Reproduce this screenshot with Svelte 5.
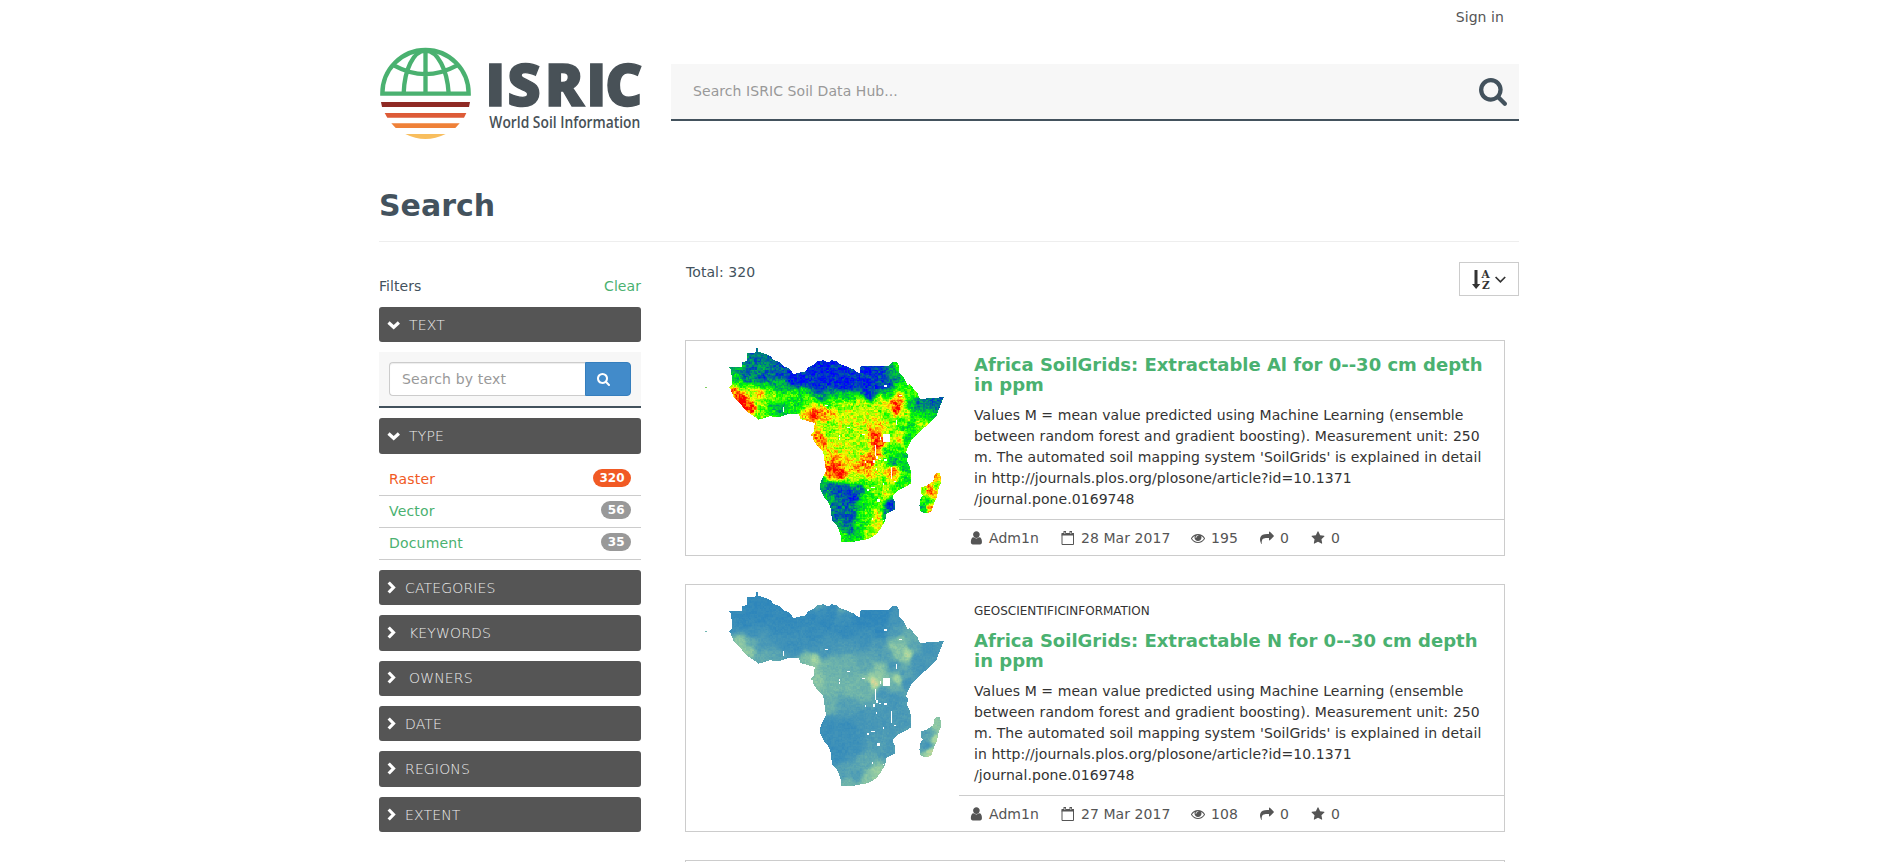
<script>
  const land = [
    [147,97],[186,96],[186,82],[200,78],[200,55],[226,54],[228,40],[233,40],[234,50],[250,54],[272,64],[280,74],[300,82],[312,94],[330,102],[340,118],[352,114],[374,110],[386,96],[402,88],[410,80],[430,76],[445,82],[455,76],[470,78],[480,88],[500,94],[510,100],[524,104],[532,112],[540,114],[542,92],[628,92],[636,82],[652,82],[658,96],[657,112],[668,122],[676,138],[682,150],[690,148],[700,160],[712,172],[716,184],[722,194],[740,190],[765,190],[792,185],[784,204],[776,224],[768,246],[752,262],[730,280],[710,298],[694,316],[684,336],[678,352],[686,360],[680,376],[690,396],[694,420],[692,446],[676,456],[654,466],[638,484],[644,500],[644,524],[620,536],[616,556],[600,584],[588,598],[566,612],[530,618],[518,622],[484,620],[482,600],[472,574],[456,556],[452,520],[444,500],[432,486],[420,462],[422,440],[432,420],[438,408],[434,380],[430,352],[416,336],[402,320],[398,304],[392,300],[402,290],[404,264],[388,260],[362,252],[356,236],[328,236],[300,246],[270,244],[236,254],[216,240],[196,226],[178,202],[160,184],[152,164],[147,158],[156,150],[156,128],[152,104]
  ];
  const madagascar = [[768,414],[780,414],[784,440],[776,460],[770,488],[760,510],[754,530],[738,536],[722,530],[718,512],[722,490],[730,482],[722,474],[722,458],[740,452],[760,438],[762,424]];
  const lakes = [[608,296,22,24],[611,149,9,8],[308,217,4,13],[436,210,8,4],[502,275,8,4],[476,300,5,6],[476,309,4,6],[546,296,8,3],[584,330,4,32],[588,364,6,8],[596,372,6,4],[612,373,8,4],[554,378,5,6],[580,376,4,8],[587,399,5,7],[632,396,5,36],[643,438,5,4],[608,444,5,6],[574,456,10,4],[562,463,6,5],[592,492,8,8],[575,550,5,4],[608,554,5,5],[648,255,4,8],[648,264,4,6],[657,181,8,3],[600,306,4,8]];

  const aluminium = [[230,60,.22],[180,100,.3],[220,90,.25],[250,100,.27],[300,110,.18],[200,125,.22],[160,130,.42],[250,130,.15],[180,148,.5],[250,150,.4],[300,150,.38],[340,130,.03],[400,130,.1],[370,145,.05],[400,100,.05],[440,100,.08],[460,130,.06],[500,110,.1],[420,155,.05],[500,150,.02],[560,110,.1],[600,110,.12],[570,150,.05],[640,100,.3],[570,180,.12],[620,150,.15],[640,130,.3],[655,95,.55],[430,180,.3],[370,165,.45],[340,180,.5],[500,185,.42],[630,180,.45],[165,170,.9],[190,195,1],[210,215,.97],[240,178,.85],[210,175,.7],[240,200,.62],[270,180,.6],[250,235,.58],[280,220,.42],[310,220,.35],[360,200,.45],[380,200,.62],[340,225,.45],[330,190,.5],[375,240,.75],[400,242,.98],[430,235,.88],[450,240,.8],[450,205,.55],[500,205,.65],[550,205,.68],[600,200,.7],[645,200,.92],[650,220,.95],[655,190,.85],[620,240,.6],[600,270,.78],[680,235,.7],[690,180,.52],[670,160,.5],[690,210,.45],[720,210,.25],[770,200,.22],[750,240,.4],[730,270,.65],[700,240,.5],[690,280,.42],[670,260,.55],[420,270,.7],[415,310,.88],[430,320,.88],[450,270,.62],[450,300,.62],[500,250,.7],[550,240,.72],[550,300,.64],[500,300,.64],[460,320,.68],[500,340,.66],[550,340,.66],[580,300,.9],[595,325,.96],[595,350,.92],[570,380,.9],[640,300,.62],[660,310,.8],[650,340,.55],[620,350,.5],[680,310,.45],[660,370,.42],[680,400,.42],[640,380,.35],[440,350,.75],[460,380,.84],[460,405,.98],[480,415,1],[450,425,.85],[500,385,.78],[520,360,.68],[540,400,.86],[520,430,.7],[570,420,.78],[600,390,.65],[640,410,.9],[640,430,.75],[680,430,.5],[660,450,.5],[600,440,.6],[560,450,.55],[430,440,.35],[430,470,.3],[450,455,.25],[470,465,.12],[500,470,.12],[520,490,.08],[540,465,.25],[440,490,.4],[480,500,.22],[560,490,.48],[590,470,.6],[600,500,.55],[620,480,.7],[630,510,.08],[640,520,.15],[615,540,.3],[540,510,.45],[510,530,.2],[470,530,.2],[500,560,.15],[510,585,.25],[540,570,.5],[560,540,.55],[600,540,.78],[590,570,.73],[570,595,.66],[530,600,.45],[490,605,.52],[480,570,.3],[772,430,.85],[750,465,.95],[765,470,.75],[740,500,.45],[730,520,.35],[750,520,.85],[730,465,.6],[770,450,.6]];
  const nitrogen = [[240,80,.03],[180,110,.05],[160,140,.12],[220,160,.14],[400,110,.04],[580,120,.02],[500,160,.05],[200,130,.05],[300,150,.08],[300,180,.14],[180,190,.62],[205,215,.64],[215,190,.42],[245,200,.25],[250,230,.4],[290,225,.35],[310,195,.1],[350,205,.12],[400,205,.14],[400,170,.08],[380,240,.55],[402,240,.72],[450,200,.2],[430,220,.22],[450,255,.48],[500,200,.25],[500,250,.45],[410,310,.62],[450,320,.5],[520,330,.5],[560,260,.38],[600,235,.3],[560,320,.46],[550,180,.15],[600,200,.25],[640,205,.62],[660,185,.55],[660,225,.6],[683,225,.78],[650,160,.25],[690,160,.4],[645,120,.2],[620,220,.3],[740,210,.2],[710,240,.22],[720,270,.2],[700,200,.38],[600,265,.6],[640,260,.25],[582,310,.88],[595,295,.65],[655,300,.75],[640,320,.45],[670,290,.3],[610,340,.25],[680,310,.2],[640,360,.2],[660,420,.25],[440,380,.45],[500,380,.3],[440,440,.12],[500,450,.12],[550,420,.22],[600,420,.22],[470,520,.1],[520,500,.14],[600,500,.28],[560,550,.38],[585,580,.68],[560,605,.6],[500,610,.5],[530,590,.3],[490,590,.3],[630,510,.25],[740,500,.2],[730,460,.3],[750,470,.35],[775,440,.65],[765,480,.75],[752,520,.8],[415,84,.35],[420,96,.1],[485,98,.35],[490,112,.1],[240,110,.03],[330,120,.04],[600,160,.05],[540,120,.02],[610,110,.02],[440,130,.04],[460,100,.05]];

  const rainbow = [[0,0,255],[0,120,135],[0,255,0],[255,255,0],[255,0,0]];
  const cool = [[46,134,187],[74,153,182],[112,181,170],[165,214,160],[250,215,150]];

  function inside(poly, x, y) {
    let hit = false;
    for (let i = 0, j = poly.length - 1; i < poly.length; j = i++) {
      const [xi, yi] = poly[i], [xj, yj] = poly[j];
      if (yi > y !== yj > y && x < ((xj - xi) * (y - yi)) / (yj - yi) + xi) hit = !hit;
    }
    return hit;
  }
  function hash(a, b) {
    let h = (a * 374761393 + b * 668265263) | 0;
    h = Math.imul(h ^ (h >>> 13), 1274126177);
    return (((h ^ (h >>> 16)) >>> 0) % 1000) / 1000 - 0.5;
  }
  function field(points, x, y) {
    let sum = 0, weight = 0;
    for (const [px, py, v] of points) {
      const d = (px - x) ** 2 + (py - y) ** 2 + 60;
      const w = 1 / (d * d);
      sum += w * v;
      weight += w;
    }
    return sum / weight;
  }
  const STEPS = 48;
  // Groups equal-valued grid cells into one path per colour step.
  function raster(points, ramp, noise) {
    const groups = Array.from({ length: STEPS + 1 }, () => '');
    const c = 3;
    for (let y = 39; y < 627; y += c) {
      for (let x = 144; x < 798; x += c) {
        const cx = x + 1.5, cy = y + 1.5;
        if (!inside(land, cx, cy) && !inside(madagascar, cx, cy)) continue;
        let v = field(points, cx, cy);
        v += noise * (hash((x / 4.5) | 0, (y / 4.5) | 0) * 0.85 + hash((x / 11) | 0, ((y / 8) | 0) + 99) * 0.7);
        v = Math.max(0, Math.min(1, v));
        groups[Math.round(v * STEPS)] += `M${x} ${y}h3v3h-3z`;
      }
    }
    return groups.map((d, i) => {
      const t = (i / STEPS) * 4, k = Math.min(3, Math.floor(t)), f = t - k;
      const rgb = ramp[k].map((a, n) => Math.round(a + (ramp[k + 1][n] - a) * f));
      return { d, fill: `rgb(${rgb.join(',')})` };
    }).filter((g) => g.d);
  }

  const abstract = "Values M = mean value predicted using Machine Learning (ensemble between random forest and gradient boosting). Measurement unit: 250 m. The automated soil mapping system 'SoilGrids' is explained in detail in http://journals.plos.org/plosone/article?id=10.1371";
  const cards = [
    { title: 'Africa SoilGrids: Extractable Al for 0--30 cm depth in ppm', date: '28 Mar 2017', views: 195, map: raster(aluminium, rainbow, 0.2), dot: '#7fd060' },
    { category: 'GEOSCIENTIFICINFORMATION', title: 'Africa SoilGrids: Extractable N for 0--30 cm depth in ppm', date: '27 Mar 2017', views: 108, map: raster(nitrogen, cool, 0.09), dot: '#6fb5b0' }
  ];
  const types = [
    { name: 'Raster', count: 320, active: true },
    { name: 'Vector', count: 56 },
    { name: 'Document', count: 35 }
  ];
  const closed = [
    { name: 'CATEGORIES' }, { name: 'KEYWORDS', wide: true }, { name: 'OWNERS', wide: true },
    { name: 'DATE' }, { name: 'REGIONS' }, { name: 'EXTENT' }
  ];
  const icons = {
    search: 'M1152 832q0-185-131.5-316.5t-316.5-131.5-316.5 131.5-131.5 316.5 131.5 316.5 316.5 131.5 316.5-131.5 131.5-316.5zm512 832q0 52-38 90t-90 38q-54 0-90-38l-343-342q-179 124-399 124-143 0-273.5-55.5t-225-150-150-225-55.5-273.5 55.5-273.5 150-225 225-150 273.5-55.5 273.5 55.5 225 150 150 225 55.5 273.5q0 220-124 399l343 343q37 37 37 90z',
    user: 'M1536 1399q0 109-62.5 187t-150.5 78h-854q-88 0-150.5-78t-62.5-187q0-85 8.5-160.5t31.5-152 58.5-131 94-89 134.5-34.5q131 128 313 128t313-128q76 0 134.5 34.5t94 89 58.5 131 31.5 152 8.5 160.5zm-256-887q0 159-112.5 271.5t-271.5 112.5-271.5-112.5-112.5-271.5 112.5-271.5 271.5-112.5 271.5 112.5 112.5 271.5z',
    eye: 'M1664 960q-152-236-381-353 61 104 61 225 0 185-131.5 316.5t-316.5 131.5-316.5-131.5-131.5-316.5q0-121 61-225-229 117-381 353 133 205 333.5 326.5t434.5 121.5 434.5-121.5 333.5-326.5zm-720-384q0-20-14-34t-34-14q-125 0-214.5 89.5t-89.5 214.5q0 20 14 34t34 14 34-14 14-34q0-86 61-147t147-61q20 0 34-14t14-34zm848 384q0 34-20 69-140 230-376.5 368.5t-499.5 138.5-499.5-139-376.5-368q-20-35-20-69t20-69q140-229 376.5-368t499.5-139 499.5 139 376.5 368q20 35 20 69z',
    share: 'M1792 640q0 26-19 45l-512 512q-19 19-45 19t-45-19-19-45v-256h-224q-98 0-175.5 6t-154 21.5-133 42.5-105.5 69.5-80 101-48.5 138.5-17.5 181q0 55 5 123 0 6 2.5 23.5t2.5 26.5q0 15-8.5 25t-23.5 10q-16 0-28-17-7-9-13-22t-13.5-30-10.5-24q-127-285-127-451 0-199 53-333 162-403 875-403h224v-256q0-26 19-45t45-19 45 19l512 512q19 19 19 45z',
    star: 'M1728 647q0 22-26 48l-363 354 86 500q1 7 1 20 0 21-10.5 35.5t-30.5 14.5q-19 0-40-12l-449-236-449 236q-22 12-40 12-21 0-31.5-14.5t-10.5-35.5q0-6 2-20l86-500-364-354q-25-27-25-48 0-37 56-46l502-73 225-455q19-41 49-41t49 41l225 455 502 73q56 9 56 46z'
  };
</script>

<div class="page">
  <nav><a class="signin">Sign in</a></nav>
  <header>
    <svg class="logo" width="262" height="100" viewBox="27 42 786 300">
      <g fill="none" stroke="#4ab170" stroke-width="13">
        <path d="M37 191A129.500 131 0 0 1 296 191Z" />
        <path d="M166.500 60V192M101 190C103 120 130 62 166.500 62C203 62 232 120 236 190M73 107Q166 158 260 107" />
      </g>
      <path fill="#8f2a24" d="M33 216H300L297 231H36Z" />
      <path fill="#dd5b37" d="M44 249H289L282 263H52Z" />
      <path fill="#ef8138" d="M64 280H269L256 294H77Z" />
      <path fill="#f8be5e" d="M106 312H227Q166 342 106 312Z" />
      <text class="brand" y="228" x="346 412 524 649 705" fill="#485157">ISRIC</text>
      <text class="tagline" x="358" y="295" textLength="453" lengthAdjust="spacingAndGlyphs" fill="#485157">World Soil Information</text>
    </svg>
    <div class="mainsearch">
      <span>Search ISRIC Soil Data Hub...</span>
      <svg width="28" height="28" viewBox="0 128 1664 1664"><path fill="#43525d" d={icons.search} /></svg>
    </div>
  </header>

  <h1>Search</h1>

  <div class="columns">
    <aside>
      <div class="filters"><span>Filters</span><a>Clear</a></div>
      {@render heading('TEXT', true, false)}
      <div class="textbox">
        <div class="field">Search by text</div>
        <div class="go"><svg width="13" height="13" viewBox="0 128 1664 1664"><path fill="#fff" d={icons.search} /></svg></div>
      </div>
      {@render heading('TYPE', true, false)}
      <ul>
        {#each types as t}
          <li class:active={t.active}><span>{t.name}</span><b>{t.count}</b></li>
        {/each}
      </ul>
      {#each closed as s}
        {@render heading(s.name, false, s.wide)}
      {/each}
    </aside>

    <main>
      <div class="toolbar">
        <span>Total: 320</span>
        <div class="sort">
          <svg width="36" height="24" viewBox="0 0 36 24">
            <path fill="#333" d="M2.500 3H5.500V17H8.300L4.100 22L0 17H2.500Z" />
            <text x="9.500" y="10.900">A</text>
            <text x="10" y="22">Z</text>
            <path fill="none" stroke="#333" stroke-width="1.700" d="M23.600 10L28.400 14.800L33.200 10" />
          </svg>
        </div>
      </div>
      {#each cards as c}
        <article>
          <svg class="map" width="272" height="210" viewBox="18 18 816 630" shape-rendering="crispEdges">
            {#each c.map as g}<path d={g.d} fill={g.fill} />{/each}
            {#each lakes as [x, y, w, h]}<rect {x} {y} width={w} height={h} fill="#fff" />{/each}
            <rect x="76" y="156" width="4" height="4" fill={c.dot} />
          </svg>
          <div class="detail">
            <div class="body">
              {#if c.category}<div class="category">{c.category}</div>{/if}
              <h4>{c.title}</h4>
              <p>{abstract}<wbr />/journal.pone.0169748</p>
            </div>
            <footer>
              <span class="u">{@render icon('user', '40 100 1620 1620')}Adm1n</span>
              <span class="d"><svg width="14" height="14" viewBox="0 0 14 14"><path fill="none" stroke="#555" d="M1 3.500V13.500H12.500V3.500M1 2.500H12.500" /><path fill="#555" d="M.5 2H13V4.500H.5ZM2.500 0H5V3.500H2.500ZM8.500 0H11V3.500H8.500Z" /><path stroke="#fff" d="M3.800 1V3M9.800 1V3" stroke-width=".7" /></svg>{c.date}</span>
              <span class="v">{@render icon('eye')}{c.views}</span>
              <span class="s">{@render icon('share')}0</span>
              <span class="r">{@render icon('star')}0</span>
            </footer>
          </div>
        </article>
      {/each}
      <article class="next"></article>
    </main>
  </div>
</div>

{#snippet heading(name, open, wide)}
  <div class="heading" class:open class:wide>
    {#if open}
      <svg width="14" height="14" viewBox="0 0 14 14"><path d="M1.500 4.500L6.700 9.300L11.900 4.500" /></svg>
    {:else}
      <svg width="14" height="14" viewBox="0 0 14 14"><path d="M1.700 1.500L6.500 6.500L1.700 11.500" /></svg>
    {/if}
    <span>{name}</span>
  </div>
{/snippet}

{#snippet icon(name, box = '0 0 1792 1792')}
  <svg width="14" height="14" viewBox={box}><path fill="#555" d={icons[name]} /></svg>
{/snippet}

<style>
  :global(body) { margin: 0; background: #fff; overflow: hidden; }
  .page {
    width: 1140px; height: 862px; overflow: hidden; margin: 0 auto; padding-right: 2px;
    font: 14px/20px "DejaVu Sans", sans-serif; letter-spacing: .07px; color: #43525d;
  }
  nav { height: 44px; display: flex; justify-content: flex-end; padding: 7px 15px 0 0; box-sizing: border-box; color: #555; }
  header { display: flex; height: 100px; }
  .logo { flex: none; display: block; overflow: visible; letter-spacing: 0; }
  .brand { font: 800 174px "Open Sans", sans-serif; stroke: #485157; stroke-width: 4px; }
  .tagline { font: 600 47px "Open Sans", sans-serif; }
  .mainsearch {
    box-sizing: border-box; width: 848px; height: 57px; margin: 20px 0 0 30px; padding: 0 12px 0 22px;
    background: #f7f7f7; border-bottom: 2px solid #43525d; color: #999;
    display: flex; justify-content: space-between; align-items: center;
  }
  .mainsearch span { padding-bottom: 2px; }
  h1 { margin: 42px 0 0; height: 55px; font-size: 30px; line-height: 40px; font-weight: 700; letter-spacing: 0; border-bottom: 1px solid #eee; }
  .columns { display: flex; justify-content: space-between; }
  aside { width: 262px; padding-top: 34px; }
  .filters { display: flex; justify-content: space-between; height: 31px; }
  a { color: #4ab170; }
  .signin { color: #555; }
  .heading {
    height: 35.400px; margin-bottom: 10px; box-sizing: border-box; padding-left: 8px; border-radius: 3px;
    background: #555; color: #eee; font-weight: 200; display: flex; align-items: center; letter-spacing: .15px;
  }
  .heading svg { margin-right: 4px; fill: none; stroke: #fff; stroke-width: 3.2; }
  .heading.open svg, .heading.wide svg { margin-right: 8px; }
  .textbox {
    box-sizing: border-box; height: 56px; margin-bottom: 10px; padding: 10px; display: flex;
    background: #f7f7f7; border-bottom: 2px solid #43525d;
  }
  .field {
    flex: 1; height: 34px; box-sizing: border-box; border: 1px solid #ccc; border-right: 0; border-radius: 4px 0 0 4px;
    background: #fff; padding: 6px 12px; color: #999; letter-spacing: .17px; box-shadow: inset 0 1px 1px rgba(0,0,0,.075);
  }
  .go {
    width: 46px; height: 34px; box-sizing: border-box; border: 1px solid #357ebd; border-radius: 0 4px 4px 0;
    background: #428bca; padding: 10px 0 0 11px;
  }
  .go svg { display: block; }
  ul { list-style: none; margin: 0 0 9.900px; padding: .2px 0 0; }
  li {
    height: 32px; box-sizing: border-box; border-bottom: 1px solid #ccc; padding: 5px 10px 0; color: #4ab170;
    display: flex; justify-content: space-between; align-items: flex-start; letter-spacing: .18px;
  }
  b { font-size: 12px; line-height: 12px; padding: 3px 6.500px; background: #999; color: #fff; border-radius: 10px; letter-spacing: 0; }
  .active { color: #f15a24; }
  .active b { background: #f15a24; }
  main { width: 834px; }
  .toolbar { height: 98px; display: flex; justify-content: space-between; align-items: flex-start; }
  .toolbar span { margin: 20px 0 0 1px; }
  .sort { box-sizing: border-box; width: 60px; height: 34px; margin-top: 20px; border: 1px solid #ccc; padding: 4px 0 0 12px; }
  .sort text { font: 700 10.500px "DejaVu Serif", serif; letter-spacing: 0; fill: #333; }
  .sort svg { display: block; }
  article { width: 818px; border: 1px solid #ccc; margin-bottom: 28px; display: flex; align-items: flex-start; }
  .next { height: 100px; }
  .map { flex: none; margin-right: 1px; }
  .detail { flex: 1; }
  .body { padding: 14px 15px 9px; color: #333; }
  .category { font-size: 12px; line-height: 17px; margin: 4px 0 11.500px; letter-spacing: -.02px; }
  h4 { margin: 0 0 10px; color: #4ab170; font-size: 18px; line-height: 19.800px; font-weight: 700; letter-spacing: 0; }
  p { margin: 0; line-height: 21px; }
  footer { height: 34px; border-top: 1px solid #ccc; display: flex; align-items: center; padding: 1px 0 0 10px; color: #555; }
  footer span { display: flex; align-items: center; white-space: pre; }
  footer svg { margin-right: 6px; }
  .u { width: 92px; }
  .d { width: 130px; }
  .v { width: 69px; }
  .s { width: 51px; }
</style>
